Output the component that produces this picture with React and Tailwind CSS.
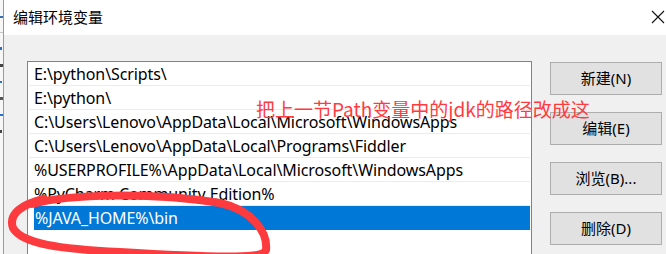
import React from 'react';

const paths = [
  'E:\\python\\Scripts\\',
  'E:\\python\\',
  'C:\\Users\\Lenovo\\AppData\\Local\\Microsoft\\WindowsApps',
  'C:\\Users\\Lenovo\\AppData\\Local\\Programs\\Fiddler',
  '%USERPROFILE%\\AppData\\Local\\Microsoft\\WindowsApps',
  '%PyCharm Community Edition%',
  '%JAVA_HOME%\\bin',
];

const buttons = ['新建(N)', '编辑(E)', '浏览(B)...', '删除(D)'];

const font = { fontFamily: '"Noto Sans", "Noto Sans CJK SC", sans-serif' };

const App = () => {
  return (
    <div className="relative w-[666px] h-[254px] overflow-hidden flex bg-white text-black" style={font}>
      {/* window behind, barely visible */}
      <div className="w-[4px] h-full bg-[#f7f7f7] border-r border-[#9a9a9a] flex flex-col gap-[14px] pt-[16px]">
        <div className="h-[2px] w-[3px] bg-[#3b6fb0]" />
        <div className="h-[1px] w-[3px] bg-[#c8c8c8]" />
        <div className="h-[3px] w-[2px] bg-[#2a6fc0]" />
        <div className="h-[3px] w-[3px] bg-[#444]" />
        <div className="h-[2px] w-[2px] bg-[#2a6fc0]" />
        <div className="h-[3px] w-[3px] bg-[#555]" />
        <div className="h-[2px] w-[3px] bg-[#2a6fc0]" />
        <div className="h-[3px] w-[2px] bg-[#444]" />
      </div>

      <div className="flex-1 flex flex-col">
        {/* title bar */}
        <div className="h-[35px] bg-white flex items-center justify-between pl-[9px] pr-[1px]">
          <span className="text-[15px] leading-none">编辑环境变量</span>
          <svg width="14" height="14" viewBox="0 0 14 14" className="mb-[2px]">
            <path d="M1 1 L13 13 M13 1 L1 13" stroke="#111" strokeWidth="1.1" />
          </svg>
        </div>

        {/* body */}
        <div className="flex-1 bg-[#f0f0f0] flex pt-[26px] pl-[23px]">
          <div className="w-[505px] bg-white border border-[#828282] border-b-0">
            {paths.map((p, i) => {
              const selected = i === paths.length - 1;
              return (
                <div key={p} className={`h-[24px] mx-[1px] ${selected ? 'pl-[5px]' : 'border-b border-[#ececec]'}`}>
                  <div className={`h-full flex items-center text-[16px] tracking-[-0.1px] ${selected ? 'bg-[#0078d7] text-white pl-[1px]' : 'pl-[5px]'}`}>
                    {p}
                  </div>
                </div>
              );
            })}
          </div>

          <div className="flex flex-col gap-[17px] ml-[18px] pt-[1px]">
            {buttons.map((b) => (
              <div
                key={b}
                className="w-[112px] h-[33px] bg-[#e1e1e1] border border-[#adadad] flex items-center justify-center text-[15px]"
              >
                {b}
              </div>
            ))}
          </div>
        </div>
      </div>

      {/* red annotation */}
      <div
        className="absolute left-[256px] top-[99px] text-[19px] leading-none text-[#ff3b3f] whitespace-nowrap"
        style={{ fontFamily: '"Noto Sans CJK SC", sans-serif' }}
      >
        把上一节Path变量中的jdk的路径改成这
      </div>

      <svg className="absolute left-0 top-0 pointer-events-none" width="666" height="254" viewBox="0 0 666 254">
        <path
          d="M32 204 C70 194 150 192 220 203 C252 210 268 232 266 250 C262 260 200 257 120 252 C60 249 22 244 13 228 C8 214 22 204 44 199"
          fill="none"
          stroke="#fd3a3e"
          strokeWidth="8"
          strokeLinecap="round"
        />
      </svg>
    </div>
  );
};

export default App;
